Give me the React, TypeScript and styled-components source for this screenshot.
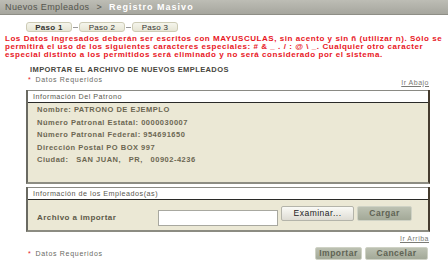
import styled, { createGlobalStyle } from 'styled-components';

const GlobalStyle = createGlobalStyle`
  html, body {
    margin: 0;
    padding: 0;
    background: #ffffff;
  }
  body {
    font-family: 'Liberation Sans', Arial, sans-serif;
    width: 448px;
    height: 265px;
    overflow: hidden;
  }
  * {
    box-sizing: border-box;
  }
`;

const Page = styled.div`
  width: 448px;
  height: 265px;
  display: flex;
  flex-direction: column;
`;

const Breadcrumb = styled.div`
  height: 15px;
  background: linear-gradient(#bdbdb5, #a6a69e);
  border-bottom: 1px solid #8e8e86;
  display: flex;
  align-items: center;
  padding-left: 5px;
  gap: 7px;
  font-size: 9px;
  letter-spacing: 0.4px;
`;

const Crumb = styled.span<{ $current?: boolean }>`
  color: ${(p) => (p.$current ? '#ffffff' : '#55554e')};
  font-weight: ${(p) => (p.$current ? 'bold' : 'normal')};
  letter-spacing: ${(p) => (p.$current ? '1px' : '0.4px')};
`;

const Steps = styled.div`
  display: flex;
  align-items: center;
  margin: 7px 0 0 26px;
  height: 10px;
`;

const Step = styled.div<{ $active?: boolean }>`
  width: 46px;
  height: 10px;
  border-radius: 3px;
  background: linear-gradient(#f5f5ec, #e6e5d4);
  border: 1px solid #cdcbb5;
  color: #333;
  font-size: 8px;
  letter-spacing: 0.3px;
  font-weight: ${(p) => (p.$active ? 'bold' : 'normal')};
  display: flex;
  align-items: center;
  justify-content: center;
`;

const Dash = styled.div`
  width: 5px;
  height: 1px;
  margin: 0 1px;
  background: #999;
`;

const Warning = styled.p`
  margin: 3px 0 0 5px;
  color: #e8161e;
  font-weight: bold;
  font-size: 8px;
  line-height: 8px;
  letter-spacing: 0.55px;
  white-space: nowrap;
`;

const Content = styled.div`
  padding: 0 18px 0 26px;
  display: flex;
  flex-direction: column;
`;

const Title = styled.div`
  margin: 6px 0 0 4px;
  font-size: 7.5px;
  line-height: 9px;
  font-weight: bold;
  color: #474740;
  letter-spacing: 0.4px;
`;

const MetaRow = styled.div<{ $top: number }>`
  display: flex;
  justify-content: space-between;
  align-items: flex-start;
  margin-top: ${(p) => p.$top}px;
`;

const Required = styled.div<{ $top?: number }>`
  font-size: 7px;
  line-height: 8px;
  color: #6a6a64;
  letter-spacing: 0.7px;
  margin: ${(p) => p.$top ?? 0}px 0 0 2px;
  &::before {
    content: '*';
    color: #e8161e;
    margin-right: 4px;
  }
`;

const Link = styled.a<{ $top?: number }>`
  font-size: 7px;
  line-height: 8px;
  color: #7a7a74;
  text-decoration: underline;
  letter-spacing: 0.5px;
  margin: ${(p) => p.$top ?? 0}px 1px 0 auto;
`;

const Panel = styled.div<{ $top: number }>`
  display: flex;
  flex-direction: column;
  margin-top: ${(p) => p.$top}px;
  background: #ebe8d5;
  border-left: 2px solid #6a6a62;
  border-right: 2px solid #453b2e;
  border-bottom: 2px solid #8c8c82;
`;

const PanelHead = styled.div`
  background: #fff;
  border-top: 1px solid #8a8a84;
  border-bottom: 1px solid #2a2a28;
  height: 13px;
  display: flex;
  align-items: center;
  padding-left: 5px;
  font-size: 7.2px;
  color: #58584f;
  letter-spacing: 0.5px;
`;

const InfoList = styled.div`
  padding: 1px 0 15.5px 9px;
  display: flex;
  flex-direction: column;
`;

const InfoRow = styled.div`
  height: 12.5px;
  display: flex;
  align-items: center;
  font-size: 7.5px;
  font-weight: bold;
  color: #6c6752;
  letter-spacing: 0.5px;
  white-space: pre;
`;

const UploadRow = styled.div`
  display: flex;
  align-items: flex-start;
  height: 30px;
  padding: 6px 0 0 9px;
`;

const FieldLabel = styled.span`
  margin-top: 7px;
  width: 121px;
  font-size: 8px;
  line-height: 9px;
  font-weight: bold;
  color: #5c5848;
  letter-spacing: 0.45px;
`;

const FileInput = styled.div`
  margin-top: 4px;
  width: 120px;
  height: 16px;
  background: #fff;
  border: 1px solid #a8a8a0;
`;

const Button = styled.button<{ $variant?: 'light' | 'green'; $w: number; $h?: number }>`
  width: ${(p) => p.$w}px;
  height: ${(p) => p.$h ?? 15}px;
  padding: 0;
  margin-left: 3px;
  font-family: inherit;
  font-size: 8.5px;
  font-weight: ${(p) => (p.$variant === 'light' ? 'normal' : 'bold')};
  color: ${(p) => (p.$variant === 'light' ? '#222' : '#5f6354')};
  background: ${(p) =>
    p.$variant === 'light'
      ? 'linear-gradient(#fafaf6, #dedcd4)'
      : 'linear-gradient(#bcc1b2, #a3a998)'};
  border: 1px solid ${(p) => (p.$variant === 'light' ? '#b4b4aa' : '#cfd2c5')};
  border-radius: 2px;
  letter-spacing: 0.5px;
`;

const Footer = styled.div`
  display: flex;
  justify-content: space-between;
  align-items: flex-start;
`;

const Actions = styled.div`
  display: flex;
  margin-top: 4px;
  padding-right: 2px;
`;

export default function App() {
  return (
    <Page>
      <GlobalStyle />
      <Breadcrumb>
        <Crumb>Nuevos Empleados</Crumb>
        <Crumb>&gt;</Crumb>
        <Crumb $current>Registro Masivo</Crumb>
      </Breadcrumb>
      <Steps>
        <Step $active>Paso 1</Step>
        <Dash />
        <Step>Paso 2</Step>
        <Dash />
        <Step>Paso 3</Step>
      </Steps>
      <Warning>
        Los Datos ingresados deberán ser escritos con MAYUSCULAS, sin acento y sin ñ (utilizar n). Sólo se
        <br />
        permitirá el uso de los siguientes caracteres especiales: # &amp; _ . / : @ \ _. Cualquier otro caracter
        <br />
        especial distinto a los permitidos será eliminado y no será considerado por el sistema.
      </Warning>
      <Content>
        <Title>IMPORTAR EL ARCHIVO DE NUEVOS EMPLEADOS</Title>
        <MetaRow $top={1.5}>
          <Required>Datos Requeridos</Required>
          <Link $top={3}>Ir Abajo</Link>
        </MetaRow>
        <Panel $top={3}>
          <PanelHead>Información Del Patrono</PanelHead>
          <InfoList>
            <InfoRow>Nombre: PATRONO DE EJEMPLO</InfoRow>
            <InfoRow>Número Patronal Estatal: 0000030007</InfoRow>
            <InfoRow>Número Patronal Federal: 954691650</InfoRow>
            <InfoRow>Dirección Postal PO BOX 997</InfoRow>
            <InfoRow>{'Ciudad:   SAN JUAN,   PR,   00902-4236'}</InfoRow>
          </InfoList>
        </Panel>
        <Panel $top={3}>
          <PanelHead>Información de los Empleados(as)</PanelHead>
          <UploadRow>
            <FieldLabel>Archivo a importar</FieldLabel>
            <FileInput />
            <Button $variant="light" $w={73}>
              Examinar...
            </Button>
            <Button $variant="green" $w={55}>
              Cargar
            </Button>
          </UploadRow>
        </Panel>
        <MetaRow $top={3}>
          <Link>Ir Arriba</Link>
        </MetaRow>
        <Footer>
          <Required $top={7}>Datos Requeridos</Required>
          <Actions>
            <Button $variant="green" $w={47} $h={13}>
              Importar
            </Button>
            <Button $variant="green" $w={63} $h={13}>
              Cancelar
            </Button>
          </Actions>
        </Footer>
      </Content>
    </Page>
  );
}
